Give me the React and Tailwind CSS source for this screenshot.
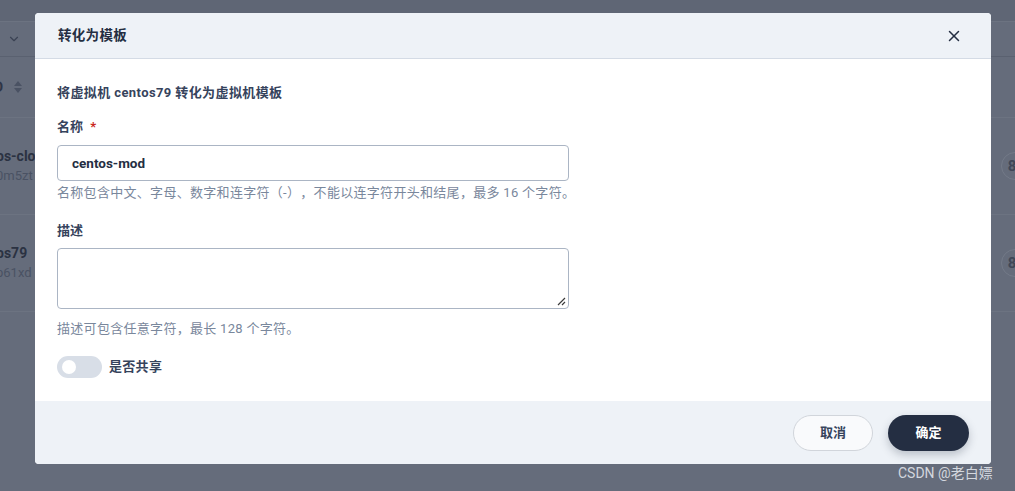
import { X, ChevronDown } from 'lucide-react'

const font = { fontFamily: 'Roboto, "Noto Sans CJK SC", "Noto Sans", sans-serif' }

function BackgroundPage() {
  return (
    <div className="w-full h-full bg-[#656c7b] flex flex-col">
      <div className="h-[22px] bg-[#5f6675] border-b border-[#6c7381]" />
      <div className="h-[35px] border-b border-[#5a6170] flex items-center pl-[7px]">
        <ChevronDown size={14} strokeWidth={2} className="text-[#3a4253]" />
      </div>
      <div className="h-[61px] border-b border-[#6c7381] flex items-center gap-[10px] -ml-[6px]">
        <span className="text-[14px] font-bold text-[#2e3546]">D</span>
        <svg width="10" height="14" viewBox="0 0 10 14">
          <path d="M5 1 L9 6 H1 Z" fill="#4a5263" />
          <path d="M5 13 L9 8 H1 Z" fill="#4a5263" />
        </svg>
      </div>
      <div className="h-[97px] border-b border-[#6c7381] flex flex-col justify-center -ml-[4px]">
        <span className="text-[14px] font-bold text-[#2b3242] leading-[20px]">os-clo</span>
        <span className="text-[13px] text-[#4a5263] leading-[20px]">0m5zt</span>
      </div>
      <div className="h-[97px] border-b border-[#6c7381] flex flex-col justify-center -ml-[4px]">
        <span className="text-[14px] font-bold text-[#2b3242] leading-[20px]">os79</span>
        <span className="text-[13px] text-[#4a5263] leading-[20px]">p61xd</span>
      </div>
    </div>
  )
}

function SideCircle({ top }) {
  return (
    <div
      className="absolute left-[1001px] w-[28px] h-[28px] rounded-full border border-[#737a88] flex items-center justify-center pr-[6px] text-[15px] font-bold text-[#3f4757]"
      style={{ top }}
    >
      8
    </div>
  )
}

export default function App() {
  return (
    <div className="relative w-[1015px] h-[491px] overflow-hidden [text-spacing-trim:space-all]" style={font}>
      <BackgroundPage />
      <SideCircle top={152} />
      <SideCircle top={249} />

      <div className="absolute left-[35px] top-[13px] w-[956px] h-[451px] bg-white rounded-[4px] overflow-hidden flex flex-col">
        <div className="h-[46px] bg-[#eef2f7] border-b border-[#d4dbe5] flex items-center justify-between pl-[23px] pr-[28px]">
          <span className="text-[13.5px] font-bold text-[#242e42] tracking-[0.3px]">转化为模板</span>
          <X size={18} strokeWidth={2} className="text-[#242e42]" />
        </div>

        <div className="flex-1 pl-[22px] pt-[25px]">
          <div className="text-[13px] font-bold text-[#36435c] leading-[18px] tracking-[0.4px]">
            将虚拟机 centos79 转化为虚拟机模板
          </div>

          <div className="mt-[16px] text-[13px] font-bold text-[#36435c] leading-[18px]">
            名称 <span className="text-[#ca2621] ml-[4px]">*</span>
          </div>
          <div className="mt-[9px] w-[512px] h-[36px] border border-[#abb5c4] rounded-[4px] flex items-center pl-[14px] text-[13.5px] font-bold text-[#242e42]">
            centos-mod
          </div>
          <div className="mt-[3px] text-[13px] text-[#79879c] leading-[18px] tracking-[0.3px]">
            名称包含中文、字母、数字和连字符（-），不能以连字符开头和结尾，最多 16 个字符。
          </div>

          <div className="mt-[20px] text-[13px] font-bold text-[#36435c] leading-[18px]">描述</div>
          <div className="relative mt-[8px] w-[512px] h-[61px] border border-[#abb5c4] rounded-[4px]">
            <svg className="absolute right-[2px] bottom-[2px]" width="9" height="9" viewBox="0 0 9 9">
              <path d="M8 1 L1 8 M8 5 L5 8" stroke="#3a3a3a" strokeWidth="1.2" />
            </svg>
          </div>
          <div className="mt-[11px] text-[13px] text-[#79879c] leading-[18px] tracking-[0.3px]">
            描述可包含任意字符，最长 128 个字符。
          </div>

          <div className="mt-[18px] flex items-center gap-[7px]">
            <div className="w-[45px] h-[22px] rounded-full bg-[#d8dee7] flex items-center pl-[5px]">
              <div className="w-[14px] h-[14px] rounded-full bg-white" />
            </div>
            <span className="text-[13px] font-bold text-[#36435c] tracking-[0.3px]">是否共享</span>
          </div>
        </div>

        <div className="h-[63px] bg-[#eef2f7] flex items-center justify-end gap-[15px] pr-[22px]">
          <button className="w-[80px] h-[36px] rounded-full border border-[#d1d5db] bg-[#f9fafc] text-[13px] font-bold text-[#36435c]">
            取消
          </button>
          <button className="w-[81px] h-[36px] rounded-full bg-[#242e42] text-[13px] font-bold text-white shadow-[0_4px_8px_rgba(36,46,66,0.25)]">
            确定
          </button>
        </div>
      </div>

      <div className="absolute left-[898px] top-[463px] text-[14px] text-[#d3d7de]">CSDN @老白嫖</div>
    </div>
  )
}
